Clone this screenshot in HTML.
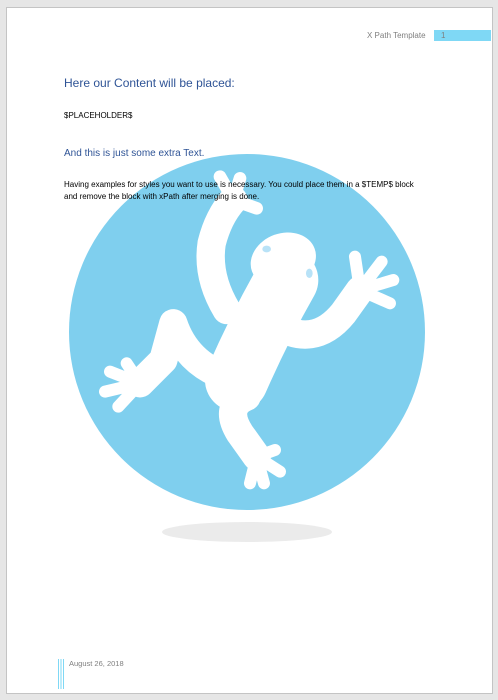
<!DOCTYPE html>
<html><head><style>
body{margin:0;width:498px;height:700px;background:#e6e6e6;position:relative;overflow:hidden;font-family:"Liberation Sans",sans-serif}
.page{position:absolute;left:6px;top:7px;width:485px;height:685px;background:#fff;border:1px solid #c4c4c4}
.t{position:absolute;white-space:nowrap}
</style></head><body>
<div class="page"></div>
<svg style="position:absolute;left:0;top:0" width="498" height="700">
<ellipse cx="247" cy="532" rx="85" ry="10" fill="#ebebeb"/>
<circle cx="247" cy="332" r="178" fill="#7fcfee"/>
<g transform="translate(60,150) scale(0.3333)" fill="#fff" stroke="#fff" stroke-linecap="round" stroke-linejoin="round">
<ellipse cx="670" cy="330" rx="100" ry="80" transform="rotate(-20 670 330)" stroke="none"/>
<path d="M680,390 Q600,530 530,690" fill="none" stroke-width="190"/>
<path d="M500,480 Q440,380 455,280 Q475,200 520,150" fill="none" stroke-width="85"/>
<path d="M520,150 L480,80 M520,150 L540,85 M520,150 L590,175" fill="none" stroke-width="38"/>
<path d="M640,520 Q760,600 850,490 L900,420" fill="none" stroke-width="85"/>
<path d="M900,420 L885,320 M900,420 L965,335 M900,420 L1000,390 M900,420 L990,460" fill="none" stroke-width="36"/>
<path d="M500,680 Q380,640 340,520 L310,630 L240,700" fill="none" stroke-width="85"/>
<path d="M240,700 L150,665 M240,700 L135,725 M240,700 L175,770 M240,700 L200,640" fill="none" stroke-width="36"/>
<path d="M560,740 Q490,770 540,850 L590,920" fill="none" stroke-width="85"/>
<path d="M590,920 L570,1000 M590,920 L612,1000 M590,920 L660,965 M590,920 L645,900" fill="none" stroke-width="36"/>
<ellipse cx="620" cy="297" rx="13" ry="10" fill="#b8e2f7" stroke="none"/>
<ellipse cx="748" cy="370" rx="10" ry="14" fill="#b8e2f7" stroke="none"/>
</g>
<rect x="434" y="30" width="57" height="11" fill="#7fd8f5"/>
<rect x="58" y="659" width="1" height="30" fill="#7fd8f5"/>
<rect x="60.5" y="659" width="1" height="30" fill="#7fd8f5"/>
<rect x="63" y="659" width="1" height="30" fill="#7fd8f5"/>
</svg>
<div class="t" style="left:367px;top:31px;font-size:8px;color:#7f7f7f">X Path Template</div>
<div class="t" style="left:441px;top:31px;font-size:8px;color:#7f7f7f">1</div>
<div class="t" style="left:64px;top:76px;font-size:12px;color:#2f5496">Here our Content will be placed:</div>
<div class="t" style="left:64px;top:111px;font-size:8px;color:#000">$PLACEHOLDER$</div>
<div class="t" style="left:64px;top:148px;font-size:10px;color:#2f5496">And this is just some extra Text.</div>
<div class="t" style="left:64px;top:179px;font-size:8px;line-height:12px;color:#000">Having examples for styles you want to use is necessary. You could place them in a $TEMP$ block<br>and remove the block with xPath after merging is done.</div>
<div class="t" style="left:69px;top:659px;font-size:7.5px;color:#7f7f7f">August 26, 2018</div>
</body></html>
